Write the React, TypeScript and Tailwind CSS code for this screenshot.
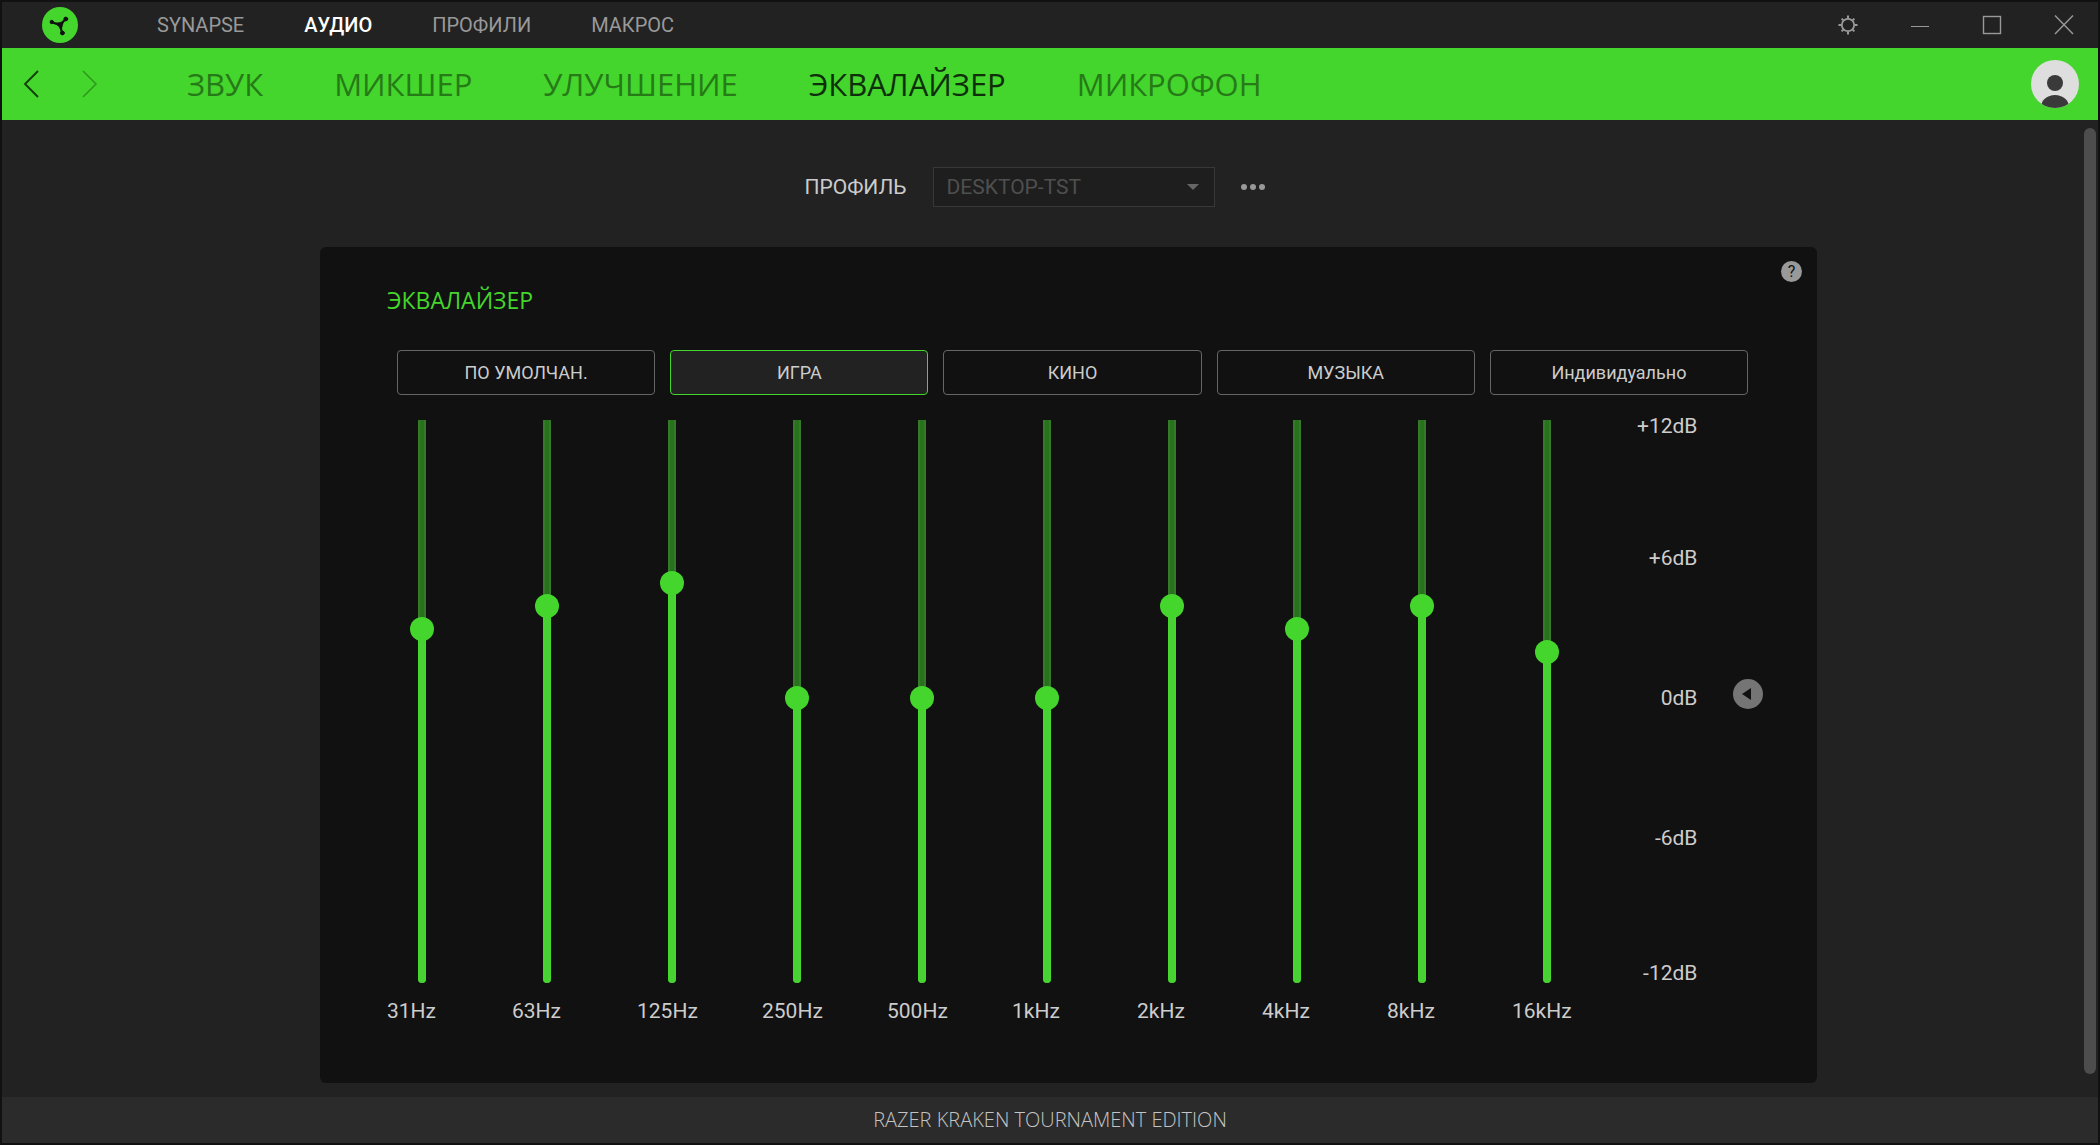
import React, { useState } from 'react';

interface Band {
  label: string;
  gain: number;
}

const TOP_TABS = ['SYNAPSE', 'АУДИО', 'ПРОФИЛИ', 'МАКРОС'];
const SECTIONS = ['ЗВУК', 'МИКШЕР', 'УЛУЧШЕНИЕ', 'ЭКВАЛАЙЗЕР', 'МИКРОФОН'];
const PRESETS = ['ПО УМОЛЧАН.', 'ИГРА', 'КИНО', 'МУЗЫКА', 'Индивидуально'];
const SCALE = ['+12dB', '+6dB', '0dB', '-6dB', '-12dB'];

const INITIAL_BANDS: Band[] = [
  { label: '31Hz', gain: 3 },
  { label: '63Hz', gain: 4 },
  { label: '125Hz', gain: 5 },
  { label: '250Hz', gain: 0 },
  { label: '500Hz', gain: 0 },
  { label: '1kHz', gain: 0 },
  { label: '2kHz', gain: 4 },
  { label: '4kHz', gain: 3 },
  { label: '8kHz', gain: 4 },
  { label: '16kHz', gain: 2 },
];

function Logo() {
  return (
    <svg viewBox="0 0 36 36" className="w-9 h-9" aria-hidden="true">
      <circle cx="18" cy="18" r="18" fill="#44d62c" />
      <g stroke="#111" strokeLinecap="round" fill="#111">
        <path d="M10 15.2 L17.5 18 L23.6 12.2 M17.5 18 L20.4 26" fill="none" strokeWidth="2.2" />
        <path d="M13.5 16 L21.5 15 L19.5 22 Z" strokeWidth="0.5" />
        <circle cx="9.8" cy="15" r="1.7" />
        <circle cx="23.8" cy="12" r="1.9" />
        <circle cx="20.4" cy="26" r="1.9" />
      </g>
    </svg>
  );
}

function GearIcon() {
  return (
    <svg viewBox="0 0 20 20" className="w-5 h-5" fill="none" stroke="#999" aria-hidden="true">
      <circle cx="10" cy="10" r="6.2" strokeWidth="1.8" />
      <path
        d="M10 0.5V3.5 M10 16.5V19.5 M0.5 10H3.5 M16.5 10H19.5 M3.6 3.6L5.4 5.4 M14.6 14.6L16.4 16.4 M3.6 16.4L5.4 14.6 M14.6 5.4L16.4 3.6"
        strokeWidth="2"
      />
    </svg>
  );
}

function Avatar() {
  return (
    <svg viewBox="0 0 48 48" className="w-12 h-12" aria-hidden="true">
      <defs>
        <clipPath id="avatar-clip">
          <circle cx="24" cy="24" r="24" />
        </clipPath>
      </defs>
      <circle cx="24" cy="24" r="24" fill="#dedede" />
      <g clipPath="url(#avatar-clip)" fill="#3a3a3a">
        <circle cx="24" cy="23" r="8" />
        <ellipse cx="24" cy="47" rx="14" ry="12" />
      </g>
    </svg>
  );
}

interface BandSliderProps {
  band: Band;
  onChange: (gain: number) => void;
}

function BandSlider({ band, onChange }: BandSliderProps) {
  const id = `band-${band.label}`;
  // share of the travel, -12..+12 dB
  const fill = ((band.gain + 12) / 24) * 100;

  return (
    <div>
      <div className="relative ml-[23px] w-6 h-[576px]">
        <div className="absolute left-2 top-[10px] bottom-[3px] w-2 rounded-b-full overflow-hidden bg-[#28711d] border-x-2 border-[#357a29]" />
        <div className="absolute inset-x-2 top-3 bottom-[3px] flex items-end">
          <div
            className="w-2 rounded-b-full bg-[#4bcf36] border-x-2 border-[#43d92b]"
            style={{ height: `${fill}%` }}
          />
        </div>
        <input
          id={id}
          type="range"
          min={-12}
          max={12}
          step={1}
          value={band.gain}
          onChange={(e) => onChange(Number(e.target.value))}
          className="absolute inset-0 w-6 h-full m-0 appearance-none bg-transparent cursor-pointer [writing-mode:vertical-lr] [direction:rtl] [&::-webkit-slider-thumb]:appearance-none [&::-webkit-slider-thumb]:w-6 [&::-webkit-slider-thumb]:h-6 [&::-webkit-slider-thumb]:rounded-full [&::-webkit-slider-thumb]:bg-[#44d62c]"
        />
      </div>
      <label htmlFor={id} className="block mt-[11px] text-[21px] leading-7 text-[#ccc]">
        {band.label}
      </label>
    </div>
  );
}

export default function App() {
  const [topTab, setTopTab] = useState('АУДИО');
  const [section, setSection] = useState('ЭКВАЛАЙЗЕР');
  const [preset, setPreset] = useState('ИГРА');
  const [bands, setBands] = useState<Band[]>(INITIAL_BANDS);

  const setGain = (index: number, gain: number) => {
    setBands(prev => prev.map((b, i) => (i === index ? { ...b, gain } : b)));
  };

  return (
    <div className="min-h-screen flex flex-col bg-[#222] border-2 border-[#111] font-['Roboto',sans-serif]">
      {/* Title bar */}
      <header className="h-[46px] flex items-center justify-between pl-10 pr-6">
        <div className="flex items-center">
          <Logo />
          <nav className="flex gap-[60px] ml-[79px] text-xl leading-7">
            {TOP_TABS.map((tab) => (
              <button
                key={tab}
                type="button"
                onClick={() => setTopTab(tab)}
                className={tab === topTab ? 'text-white font-medium' : 'text-[#999] hover:text-white'}
              >
                {tab}
              </button>
            ))}
          </nav>
        </div>
        <div className="flex gap-[52px]">
          <button type="button" aria-label="Настройки" className="w-5 h-5">
            <GearIcon />
          </button>
          <button type="button" aria-label="Свернуть" className="w-5 h-5">
            <svg viewBox="0 0 20 20" className="w-5 h-5" aria-hidden="true">
              <path d="M1 11.5H19" stroke="#999" />
            </svg>
          </button>
          <button type="button" aria-label="Развернуть" className="w-5 h-5">
            <svg viewBox="0 0 20 20" className="w-5 h-5" aria-hidden="true">
              <rect x="1.5" y="1.5" width="17" height="17" fill="none" stroke="#999" strokeWidth="1.4" />
            </svg>
          </button>
          <button type="button" aria-label="Закрыть" className="w-5 h-5">
            <svg viewBox="0 0 20 20" className="w-5 h-5" aria-hidden="true">
              <path d="M1 0.5L19 19M19 0.5L1 19" stroke="#999" strokeWidth="1.4" />
            </svg>
          </button>
        </div>
      </header>

      {/* Section bar */}
      <div className="h-[72px] flex items-center justify-between bg-[#44d62c] pl-5 pr-[19px]">
        <div className="flex items-center">
          <button type="button" aria-label="Назад" className="w-5 h-7">
            <svg viewBox="0 0 20 28" className="w-5 h-7" fill="none" stroke="#143a0e" strokeWidth="1.8" aria-hidden="true">
              <path d="M16 1L3 14L16 27" />
            </svg>
          </button>
          <button type="button" aria-label="Вперёд" className="w-5 h-7 ml-[38px]">
            <svg viewBox="0 0 20 28" className="w-5 h-7" fill="none" stroke="#2f9a1f" strokeWidth="1.6" aria-hidden="true">
              <path d="M3 1L16 14L3 27" />
            </svg>
          </button>
          <nav className="flex gap-[71px] ml-[87px] font-['Open_Sans',sans-serif] text-[31px] leading-10">
            {SECTIONS.map((name) => (
              <button
                key={name}
                type="button"
                onClick={() => setSection(name)}
                className={name === section ? 'text-[#0f2f0a]' : 'text-[#267a18] hover:text-[#0f2f0a]'}
              >
                {name}
              </button>
            ))}
          </nav>
        </div>
        <button type="button" aria-label="Учётная запись" className="w-12 h-12">
          <Avatar />
        </button>
      </div>

      <div className="flex-1 flex">
        <main className="flex-1 pl-[318px] pr-[267px] pt-[47px] pb-[14px]">
          {/* Profile picker */}
          <div className="flex items-center justify-center pr-[68px]">
            <label htmlFor="profile" className="text-[21px] leading-7 text-[#ccc]">ПРОФИЛЬ</label>
            <div className="relative ml-[26px]">
              <select
                id="profile"
                className="w-[282px] h-10 pl-[13px] pr-8 appearance-none bg-[#1e1e1e] border border-[#383838] text-[21px] leading-7 text-[#4f4f4f]"
              >
                <option>DESKTOP-TST</option>
              </select>
              <svg viewBox="0 0 12 6" className="absolute right-4 top-[17px] w-3 h-1.5 pointer-events-none" fill="#666" aria-hidden="true">
                <path d="M0 0H12L6 6Z" />
              </svg>
            </div>
            <button type="button" aria-label="Действия с профилем" className="ml-[26px]">
              <svg viewBox="0 0 24 6" className="w-6 h-1.5" fill="#999" aria-hidden="true">
                <circle cx="3" cy="3" r="3" />
                <circle cx="12" cy="3" r="3" />
                <circle cx="21" cy="3" r="3" />
              </svg>
            </button>
          </div>

          {/* Equalizer panel */}
          <section className="relative mt-10 pl-[67px] pr-[54px] pt-[37px] pb-[58px] rounded-md bg-[#111]">
            <button
              type="button"
              aria-label="Справка"
              className="absolute top-[14px] right-[15px] w-[21px] h-[21px] rounded-full bg-[#999] text-[#111] text-base leading-[21px] text-center"
            >
              ?
            </button>

            <h2 className="font-['Open_Sans',sans-serif] text-[23px] leading-8 text-[#44d62c]">ЭКВАЛАЙЗЕР</h2>

            <div className="flex gap-[15px] mt-[34px] ml-[10px] mr-[15px]">
              {PRESETS.map((name) => (
                <button
                  key={name}
                  type="button"
                  onClick={() => setPreset(name)}
                  className={`flex-1 h-[45px] rounded border text-lg leading-6 text-[#ccc] ${
                    name === preset ? 'bg-[#222] border-[#44d62c]' : 'border-[#666] hover:border-[#999]'
                  }`}
                >
                  {name}
                </button>
              ))}
            </div>

            <div className="flex items-start mt-[15px]">
              <div className="flex-1 grid grid-cols-10">
                {bands.map((band, i) => (
                  <BandSlider key={band.label} band={band} onChange={(gain) => setGain(i, gain)} />
                ))}
              </div>
              <div className="w-[60px] grid grid-rows-[132px_140px_140px_135px_28px] mt-[2px] text-right text-[21px] leading-7 text-[#ccc]">
                {SCALE.map((mark) => (
                  <span key={mark}>{mark}</span>
                ))}
              </div>
              <button
                type="button"
                aria-label="Сбросить на 0dB"
                className="w-[30px] h-[30px] ml-9 mt-[269px] rounded-full bg-[#757575]"
              >
                <svg viewBox="0 0 30 30" className="w-[30px] h-[30px]" fill="#111" aria-hidden="true">
                  <path d="M9 15L18 9V21Z" />
                </svg>
              </button>
            </div>
          </section>
        </main>

        {/* Scroll thumb */}
        <div className="w-[14px] flex pt-2 pb-[23px] pr-[2px]">
          <div className="flex-1 rounded-full bg-[#4d4d4d]" />
        </div>
      </div>

      <footer className="h-[46px] flex items-center justify-center bg-[#2b2b2b] text-xl leading-7 text-[#c4c4c4]">
        <span className="font-['Open_Sans',sans-serif] font-light">RAZER KRAKEN TOURNAMENT EDITION</span>
      </footer>
    </div>
  );
}
